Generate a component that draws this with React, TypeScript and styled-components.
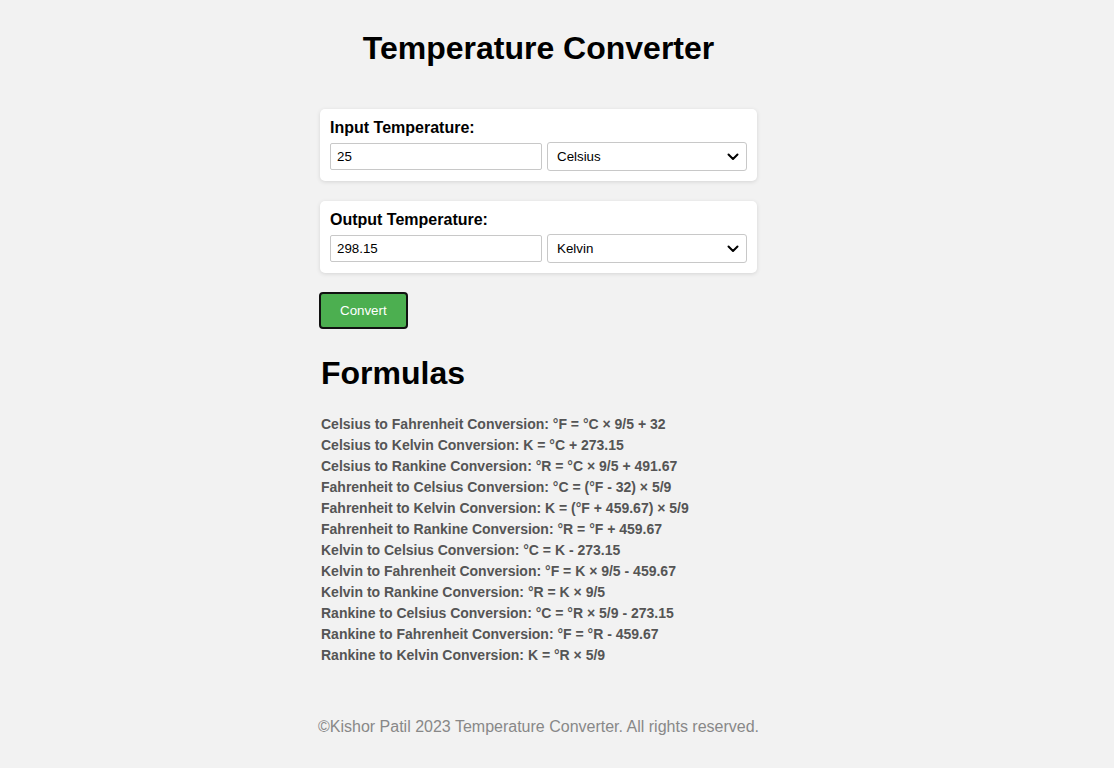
import React from "react";
import styled, { createGlobalStyle } from "styled-components";

const GlobalStyle = createGlobalStyle`
  html, body { margin: 0; padding: 0; background: #f2f2f2; }
  body { font-family: "Liberation Sans", Arial, sans-serif; color: #000; }
`;

const Page = styled.div`
  display: flex;
  flex-direction: column;
  align-items: center;
  padding: 30px 37px 0 0;
  min-height: 768px;
  box-sizing: border-box;
`;

const Container = styled.main`
  width: 437px;
  display: flex;
  flex-direction: column;
`;

const Title = styled.h1`
  margin: 0 0 42px;
  font-size: 32px;
  line-height: 37px;
  font-weight: bold;
  text-align: center;
`;

const Card = styled.section`
  background: #fff;
  border-radius: 5px;
  box-shadow: 0 1px 4px rgba(0, 0, 0, 0.12);
  padding: 10px;
  margin-bottom: 20px;
`;

const Label = styled.label`
  display: block;
  font-size: 16px;
  line-height: 18px;
  font-weight: bold;
  margin-bottom: 5px;
`;

const Row = styled.div`
  display: flex;
  align-items: center;
  gap: 5px;
`;

const NumberInput = styled.input`
  width: 212px;
  height: 27px;
  box-sizing: border-box;
  border: 1px solid #c8c8c8;
  border-radius: 2px;
  padding: 0 6px;
  font-family: "Liberation Sans", Arial, sans-serif;
  font-size: 13.33px;
  color: #000;
  background: #fff;
  outline: none;
`;

const SelectWrap = styled.div`
  position: relative;
  width: 200px;
  height: 29px;
`;

const Select = styled.select`
  appearance: none;
  width: 100%;
  height: 100%;
  box-sizing: border-box;
  border: 1px solid #c8c8c8;
  border-radius: 3px;
  padding: 0 30px 0 9px;
  font-family: "Liberation Sans", Arial, sans-serif;
  font-size: 13.33px;
  color: #000;
  background: #fff;
  outline: none;
`;

const Chevron = styled.svg`
  position: absolute;
  right: 8px;
  top: 11px;
  width: 12px;
  height: 8px;
  pointer-events: none;
`;

const ConvertButton = styled.button`
  align-self: flex-start;
  margin: -1px 0 0 -1px;
  background: #4caf50;
  color: #fff;
  border: 2px solid #111;
  border-radius: 4px;
  padding: 9px 19px;
  font-family: "Liberation Sans", Arial, sans-serif;
  font-size: 13.33px;
  line-height: 15px;
  cursor: pointer;
`;

const SectionTitle = styled.h2`
  margin: 26px 0 22px 1px;
  font-size: 32px;
  line-height: 37px;
  font-weight: bold;
`;

const FormulaList = styled.div`
  display: flex;
  flex-direction: column;
  margin-left: 1px;
`;

const Formula = styled.p`
  margin: 0;
  font-size: 14px;
  line-height: 21px;
  font-weight: bold;
  color: #555;
  white-space: nowrap;
`;

const Footer = styled.footer`
  margin: 52px 0 0 -2px;
  text-align: center;
  font-size: 16px;
  line-height: 18px;
  color: #888;
  white-space: nowrap;
`;

const units = ["Celsius", "Fahrenheit", "Kelvin", "Rankine"];

const formulas = [
  "Celsius to Fahrenheit Conversion: °F = °C × 9/5 + 32",
  "Celsius to Kelvin Conversion: K = °C + 273.15",
  "Celsius to Rankine Conversion: °R = °C × 9/5 + 491.67",
  "Fahrenheit to Celsius Conversion: °C = (°F - 32) × 5/9",
  "Fahrenheit to Kelvin Conversion: K = (°F + 459.67) × 5/9",
  "Fahrenheit to Rankine Conversion: °R = °F + 459.67",
  "Kelvin to Celsius Conversion: °C = K - 273.15",
  "Kelvin to Fahrenheit Conversion: °F = K × 9/5 - 459.67",
  "Kelvin to Rankine Conversion: °R = K × 9/5",
  "Rankine to Celsius Conversion: °C = °R × 5/9 - 273.15",
  "Rankine to Fahrenheit Conversion: °F = °R - 459.67",
  "Rankine to Kelvin Conversion: K = °R × 5/9",
];

const UnitSelect: React.FC<{ value: string }> = ({ value }) => (
  <SelectWrap>
    <Select defaultValue={value}>
      {units.map((u) => (
        <option key={u} value={u}>
          {u}
        </option>
      ))}
    </Select>
    <Chevron viewBox="0 0 12 8">
      <path d="M1.5 1.5 L6 6 L10.5 1.5" fill="none" stroke="#000" strokeWidth="2" strokeLinecap="round" strokeLinejoin="round" />
    </Chevron>
  </SelectWrap>
);

export default function App() {
  return (
    <>
      <GlobalStyle />
      <Page>
        <Container>
          <Title>Temperature Converter</Title>
          <Card>
            <Label>Input Temperature:</Label>
            <Row>
              <NumberInput type="text" defaultValue="25" />
              <UnitSelect value="Celsius" />
            </Row>
          </Card>
          <Card>
            <Label>Output Temperature:</Label>
            <Row>
              <NumberInput type="text" defaultValue="298.15" readOnly />
              <UnitSelect value="Kelvin" />
            </Row>
          </Card>
          <ConvertButton>Convert</ConvertButton>
          <SectionTitle>Formulas</SectionTitle>
          <FormulaList>
            {formulas.map((f) => (
              <Formula key={f}>{f}</Formula>
            ))}
          </FormulaList>
          <Footer>©Kishor Patil 2023 Temperature Converter. All rights reserved.</Footer>
        </Container>
      </Page>
    </>
  );
}
